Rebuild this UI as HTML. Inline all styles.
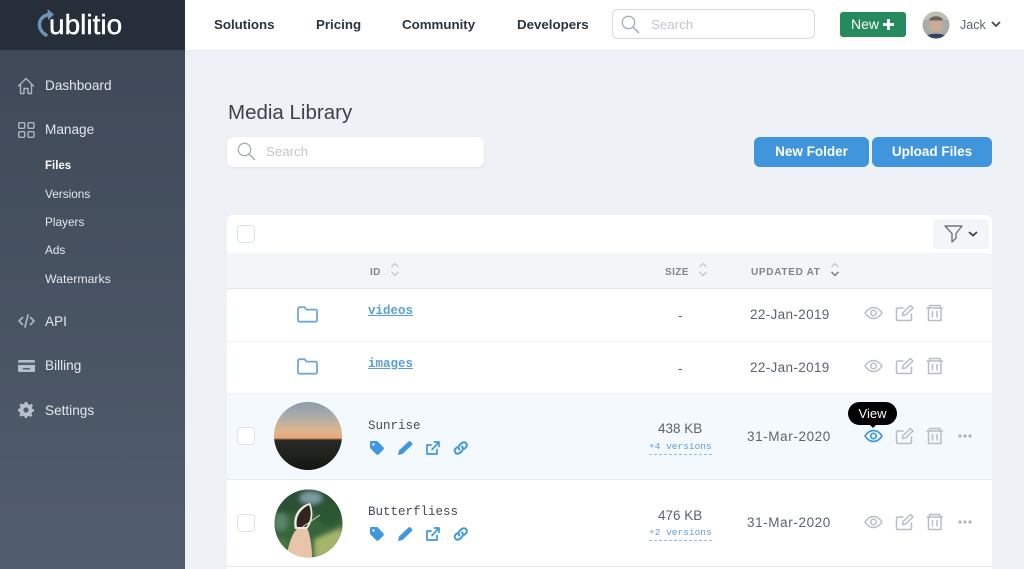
<!DOCTYPE html>
<html><head><meta charset="utf-8"><style>
*{box-sizing:border-box}
html,body{margin:0;padding:0;width:1024px;height:569px;overflow:hidden;background:#eef1f5;font-family:"Liberation Sans",sans-serif}
.t{position:absolute;white-space:nowrap;line-height:1}
.a{position:absolute}
svg{position:absolute;overflow:visible}
.side{color:#e4e8ee;font-size:13.6px}
.sub{color:#e4e8ee;font-size:11.8px}
.nav{color:#2b3440;font-size:13.3px;font-weight:bold;top:18px}
.hd{color:#7d858d;font-size:10px;font-weight:bold;letter-spacing:.4px}
.mono{font-family:"Liberation Mono",monospace}
.date{color:#5d646c;font-size:13.5px;letter-spacing:.35px}
.size{color:#5d646c;font-size:13.5px}
.ver{font-family:"Liberation Mono",monospace;font-size:9.5px;color:#5f9fd6;border-bottom:1px dashed #8fbde3;padding-bottom:2px}
.cb{position:absolute;width:18px;height:18px;border:1px solid #dfe3e8;border-radius:4px;background:#fff}
.g{fill:none;stroke:#b9bec4;stroke-width:1.5;stroke-linecap:round;stroke-linejoin:round}
.b{fill:none;stroke:#3f97dd;stroke-width:1.7;stroke-linecap:round;stroke-linejoin:round}
.s{fill:none;stroke:#aab6c4;stroke-width:1.4;stroke-linecap:round;stroke-linejoin:round}
</style></head><body>

<!-- sidebar -->
<div class="a" style="left:0;top:0;width:185px;height:50px;background:#262f39"></div>
<div class="a" style="left:0;top:50px;width:185px;height:519px;background:linear-gradient(#3f4958,#525d6d)"></div>
<svg style="left:36px;top:8px" width="30" height="30" viewBox="0 0 30 30"><path d="M10 27C3 23 1.500 15 6 10C8.500 7.500 11 6.500 14 6.500" fill="none" stroke="#6f94b5" stroke-width="3.400" stroke-linecap="round"/><path d="M11.500 1L18 6.500L12 12Z" fill="#6f94b5"/></svg>
<div class="t" style="left:49px;top:11px;color:#fff;font-size:28px;-webkit-text-stroke:.4px #fff">ublitio</div>

<svg style="left:17px;top:77px" width="18" height="18" viewBox="0 0 18 18"><path class="s" d="M1.500 9L9 1.500L16.500 9M3.500 7.500V16.500H7V11.500H11V16.500H14.500V7.500"/></svg>
<div class="t side" style="left:45px;top:79px">Dashboard</div>
<svg style="left:18px;top:122px" width="17" height="16" viewBox="0 0 17 16"><g class="s"><rect x=".7" y=".7" width="6" height="5.6" rx="1"/><rect x="10" y=".7" width="6" height="5.6" rx="1"/><rect x=".7" y="9.7" width="6" height="5.6" rx="1"/><rect x="10" y="9.7" width="6" height="5.6" rx="1"/></g></svg>
<div class="t side" style="left:45px;top:123px">Manage</div>
<div class="t sub" style="left:45px;top:161px;color:#fff;font-weight:bold;font-size:11.500px">Files</div>
<div class="t sub" style="left:45px;top:189px">Versions</div>
<div class="t sub" style="left:45px;top:217px">Players</div>
<div class="t sub" style="left:45px;top:245px">Ads</div>
<div class="t sub" style="left:45px;top:273px;font-size:12.300px">Watermarks</div>
<svg style="left:18px;top:314px" width="17" height="14" viewBox="0 0 17 14"><path class="s" style="stroke-width:1.7" d="M4.500 3.500L1 7L4.500 10.500M12.500 3.500L16 7L12.500 10.500M10 1L7 13"/></svg>
<div class="t side" style="left:45px;top:315px">API</div>
<svg style="left:18px;top:360px" width="17" height="12" viewBox="0 0 17 12"><rect width="17" height="12" rx="1.5" fill="#b5c0cc"/><rect y="2.500" width="17" height="2.500" fill="#525d6d"/><rect x="5" y="8" width="7" height="1.5" fill="#525d6d"/></svg>
<div class="t side" style="left:45px;top:359px">Billing</div>
<svg style="left:18px;top:402px" width="16" height="16" viewBox="0 0 16 16"><path d="M6.700 0H9.300L9.800 2.100L11.500 2.900L13.400 1.800L15 3.600L13.800 5.300L14.300 7L16 7.500V9.500L14.200 10L13.400 11.700L14.400 13.500L12.700 15L11 13.900L9.400 14.400L9 16H6.900L6.400 14.300L4.700 13.700L3 14.800L1.200 13.200L2.300 11.400L1.700 9.800L0 9.400V7L1.800 6.500L2.500 4.800L1.500 3L3.200 1.400L4.900 2.400L6.400 1.800Z" fill="#b5c0cc"/><circle cx="8" cy="8" r="2.600" fill="#525d6d"/></svg>
<div class="t side" style="left:45px;top:404px">Settings</div>

<!-- top nav -->
<div class="a" style="left:185px;top:0;width:839px;height:51px;background:#fff;border-bottom:1px solid #e4e7eb"></div>
<div class="t nav" style="left:214px">Solutions</div>
<div class="t nav" style="left:316px">Pricing</div>
<div class="t nav" style="left:402px">Community</div>
<div class="t nav" style="left:517px">Developers</div>
<div class="a" style="left:612px;top:9px;width:203px;height:30px;border:1px solid #d5dae0;border-radius:6px;background:#fff"></div>
<svg style="left:621px;top:15px" width="19" height="19" viewBox="0 0 19 19"><circle cx="7.500" cy="7.500" r="6.200" fill="none" stroke="#a8adb3" stroke-width="1.300"/><path d="M12 12L18 18" stroke="#a8adb3" stroke-width="1.400"/></svg>
<div class="t" style="left:651px;top:18px;color:#c2c6cb;font-size:13.300px">Search</div>
<div class="a" style="left:840px;top:12px;width:66px;height:25px;background:#258a5e;border-radius:3px"></div>
<div class="t" style="left:851px;top:17px;color:#fff;font-size:14px">New</div>
<svg style="left:882px;top:18px" width="13" height="13" viewBox="0 0 13 13"><path d="M6.500 1V12M1 6.500H12" stroke="#fff" stroke-width="2.800"/></svg>
<svg style="left:922px;top:11px" width="28" height="28" viewBox="0 0 28 28"><defs><clipPath id="av"><circle cx="14" cy="14" r="13.500"/></clipPath></defs><g clip-path="url(#av)"><rect width="28" height="28" fill="#a8aca6"/><rect x="0" y="0" width="28" height="9" fill="#c0bdb1"/><ellipse cx="14" cy="13" rx="6.500" ry="8" fill="#cdaa96"/><path d="M7 9C9 4 19 4 21 9L20 9.500H8Z" fill="#6a6762"/><path d="M1 28C3 21 25 21 27 28Z" fill="#33425c"/></g></svg>
<div class="t" style="left:960px;top:19px;color:#5d646c;font-size:12.500px">Jack</div>
<svg style="left:991px;top:21px" width="10" height="7" viewBox="0 0 10 7"><path d="M1 1L5 5L9 1" fill="none" stroke="#444c55" stroke-width="1.800"/></svg>

<!-- header -->
<div class="t" style="left:228px;top:103px;color:#3a424c;font-size:20.500px">Media Library</div>
<div class="a" style="left:227px;top:137px;width:257px;height:30px;background:#fff;border-radius:6px;box-shadow:0 1px 3px rgba(0,0,0,.06)"></div>
<svg style="left:237px;top:142px" width="19" height="19" viewBox="0 0 19 19"><circle cx="7.500" cy="7.500" r="6.200" fill="none" stroke="#a8adb3" stroke-width="1.300"/><path d="M12 12L18 18" stroke="#a8adb3" stroke-width="1.400"/></svg>
<div class="t" style="left:266px;top:145px;color:#c2c6cb;font-size:13.300px">Search</div>
<div class="a" style="left:754px;top:137px;width:115px;height:30px;background:#4095dc;border-radius:6px"></div>
<div class="t" style="left:754px;top:145px;width:115px;text-align:center;color:#fff;font-size:13.500px;font-weight:bold">New Folder</div>
<div class="a" style="left:872px;top:137px;width:120px;height:30px;background:#4095dc;border-radius:6px"></div>
<div class="t" style="left:872px;top:145px;width:120px;text-align:center;color:#fff;font-size:13.500px;font-weight:bold">Upload Files</div>

<!-- table -->
<div class="a" style="left:227px;top:215px;width:765px;height:354px;background:#fff;border-radius:6px 6px 0 0"></div>
<div class="cb" style="left:237px;top:225px"></div>
<div class="a" style="left:933px;top:219px;width:56px;height:30px;background:#f3f6f9;border-radius:4px"></div>
<svg style="left:944px;top:225px" width="19" height="18" viewBox="0 0 19 18"><path d="M1 1H18L12 8.500V13L8 17V8.500Z" fill="none" stroke="#6e757d" stroke-width="1.400" stroke-linejoin="round"/></svg>
<svg style="left:968px;top:231px" width="10" height="6" viewBox="0 0 10 6"><path d="M1 1L5 4.500L9 1" fill="none" stroke="#3b434c" stroke-width="1.800"/></svg>

<div class="a" style="left:227px;top:253px;width:765px;height:36px;background:#f3f6f9;border-bottom:1px solid #e1e5e9"></div>
<div class="t hd" style="left:370px;top:267px;margin-top:1px">ID</div>
<svg style="left:390px;top:262px" width="10" height="15" viewBox="0 0 10 15"><path d="M1.500 5L5 1.500L8.500 5M1.500 10L5 13.500L8.500 10" fill="none" stroke="#c3c8cd" stroke-width="1.300"/></svg>
<div class="t hd" style="left:665px;top:267px;margin-top:1px">SIZE</div>
<svg style="left:698px;top:262px" width="10" height="15" viewBox="0 0 10 15"><path d="M1.500 5L5 1.500L8.500 5M1.500 10L5 13.500L8.500 10" fill="none" stroke="#c3c8cd" stroke-width="1.300"/></svg>
<div class="t hd" style="left:751px;top:267px;margin-top:1px;letter-spacing:.7px">UPDATED AT</div>
<svg style="left:830px;top:262px" width="10" height="15" viewBox="0 0 10 15"><path d="M1.500 5L5 1.500L8.500 5" fill="none" stroke="#c3c8cd" stroke-width="1.300"/><path d="M1.500 10L5 13.500L8.500 10" fill="none" stroke="#6e757d" stroke-width="1.300"/></svg>

<!-- rows backgrounds -->
<div class="a" style="left:227px;top:341px;width:765px;height:1px;background:#f1f3f6"></div>
<div class="a" style="left:227px;top:393px;width:765px;height:87px;background:#f4f9fe;border-top:1px solid #eef1f5;border-bottom:1px solid #e6e9ed"></div>
<div class="a" style="left:227px;top:566px;width:765px;height:1px;background:#e6e9ed"></div>

<!-- folder rows -->
<svg style="left:297px;top:306px" width="21" height="17" viewBox="0 0 21 17"><path d="M1 3C1 2 1.700 1.200 2.700 1.200H7.500L9.500 3.600H18.500C19.400 3.600 20 4.200 20 5.200V14C20 15 19.400 15.700 18.500 15.700H2.500C1.600 15.700 1 15 1 14Z" fill="none" stroke="#6ea8dc" stroke-width="1.800" stroke-linejoin="round"/></svg>
<svg style="left:297px;top:358px" width="21" height="17" viewBox="0 0 21 17"><path d="M1 3C1 2 1.700 1.200 2.700 1.200H7.500L9.500 3.600H18.500C19.400 3.600 20 4.200 20 5.200V14C20 15 19.400 15.700 18.500 15.700H2.500C1.600 15.700 1 15 1 14Z" fill="none" stroke="#6ea8dc" stroke-width="1.800" stroke-linejoin="round"/></svg>
<div class="t mono" style="left:368px;top:305px;font-size:12.500px;font-weight:bold;color:#5a9fd8;text-decoration:underline">videos</div>
<div class="t mono" style="left:368px;top:358px;font-size:12.500px;font-weight:bold;color:#5a9fd8;text-decoration:underline">images</div>
<div class="t date" style="left:678px;top:309px">-</div>
<div class="t date" style="left:678px;top:362px">-</div>
<div class="t date" style="left:750px;top:308px">22-Jan-2019</div>
<div class="t date" style="left:750px;top:361px">22-Jan-2019</div>

<svg style="left:864px;top:304px" width="80" height="18" viewBox="0 0 80 18"><g class="g"><path d="M1 9C4 4.500 7 3.500 9.500 3.500C12 3.500 15 4.500 18 9C15 13.500 12 14.500 9.500 14.500C7 14.500 4 13.500 1 9Z"/><circle cx="9.500" cy="9" r="2.700"/><path d="M39 4H34C33 4 32.500 4.700 32.500 5.500V15C32.500 15.800 33 16.500 34 16.500H46C47 16.500 47.500 15.800 47.500 15V10M38.500 11.500L39 8.500L46.500 1.500L49 4L41.500 11Z"/><path d="M63 4H78.500M65.500 1.500H76V4H65.500ZM64.500 4V16.500H77V4M68.500 7.500V13M73 7.500V13"/></g></svg>
<svg style="left:864px;top:357px" width="80" height="18" viewBox="0 0 80 18"><g class="g"><path d="M1 9C4 4.500 7 3.500 9.500 3.500C12 3.500 15 4.500 18 9C15 13.500 12 14.500 9.500 14.500C7 14.500 4 13.500 1 9Z"/><circle cx="9.500" cy="9" r="2.700"/><path d="M39 4H34C33 4 32.500 4.700 32.500 5.500V15C32.500 15.800 33 16.500 34 16.500H46C47 16.500 47.500 15.800 47.500 15V10M38.500 11.500L39 8.500L46.500 1.500L49 4L41.500 11Z"/><path d="M63 4H78.500M65.500 1.500H76V4H65.500ZM64.500 4V16.500H77V4M68.500 7.500V13M73 7.500V13"/></g></svg>

<!-- media rows -->
<div class="cb" style="left:237px;top:427px"></div>
<div class="cb" style="left:237px;top:514px"></div>
<div class="a" style="left:274px;top:402px;width:68px;height:68px;border-radius:50%;background:linear-gradient(#8c9cad 0%,#aeaca8 22%,#dfb48c 42%,#e8a878 53%,#2a2a26 56%,#1f211b 80%,#141512 100%)"></div>
<svg style="left:274px;top:489px" width="69" height="69" viewBox="0 0 69 69"><defs><clipPath id="bf"><circle cx="34.500" cy="34.500" r="34"/></clipPath><filter id="bl"><feGaussianBlur stdDeviation="2.500"/></filter></defs><g clip-path="url(#bf)"><rect width="69" height="69" fill="#38643c"/><g filter="url(#bl)"><rect y="0" width="69" height="24" fill="#2c5135"/><ellipse cx="37" cy="9" rx="11" ry="6" fill="#7d9ba0"/><ellipse cx="7" cy="33" rx="7" ry="9" fill="#5b8468"/><ellipse cx="55" cy="25" rx="12" ry="12" fill="#2b5632"/><path d="M40 69V50L69 38V69Z" fill="#a4b56c"/><path d="M0 50H14L10 69H0Z" fill="#4b7a44"/></g><path d="M12 69C14 58 17 47 22 41C26 37 32 37 34 41C37 50 38 60 38 69Z" fill="#e8c4a8"/><path d="M21 40C18 28 24 17 36 14C40 22 39 33 33 40Z" fill="#f0ece4"/><path d="M23 38C21 29 26 20 35 16C38 23 37 32 32 38Z" fill="#33241e"/><path d="M24 41L46 26" stroke="#d8d8d0" stroke-width="1"/></g></svg>

<div class="t mono" style="left:368px;top:420px;font-size:12.500px;color:#454c54">Sunrise</div>
<div class="t mono" style="left:368px;top:506px;font-size:12.500px;color:#454c54">Butterfliess</div>

<!-- blue icon sets -->
<svg style="left:369px;top:440px" width="100" height="16" viewBox="0 0 100 16"><path d="M2 1H7.500C8 1 8.500 1.200 9 1.700L14.500 7.500C15 8 15 9 14.500 9.500L9.500 14.500C9 15 8 15 7.500 14.500L1.500 8.500C1.200 8 1 7.500 1 7V2C1 1.400 1.400 1 2 1Z" fill="#3f97dd"/><circle cx="4.500" cy="4.500" r="1.200" fill="#f4f9fe"/><path d="M29 15L30 10.500L39.500 1.500C40 1 41 1 41.500 1.500L43 3C43.500 3.500 43.500 4.500 43 5L33.500 14Z" fill="#3f97dd"/><g class="b"><path d="M62 5H58V14H68V9.500M63 9.500L69.500 2.500M65.500 2H70V6.500"/><path d="M90.500 9.500C89 8 89.500 6 91 4.500L92.500 3.200C94 2 96 2 97 3.200C98.200 4.400 98 6.200 97 7.300L95.500 8.700M93 6.500C94.500 8 94 10 92.500 11.500L91 12.800C89.500 14 87.500 14 86.500 12.800C85.300 11.600 85.500 9.800 86.500 8.700L88 7.300" stroke-width="2"/></g></svg>
<svg style="left:369px;top:526px" width="100" height="16" viewBox="0 0 100 16"><path d="M2 1H7.500C8 1 8.500 1.200 9 1.700L14.500 7.500C15 8 15 9 14.500 9.500L9.500 14.500C9 15 8 15 7.500 14.500L1.500 8.500C1.200 8 1 7.500 1 7V2C1 1.400 1.400 1 2 1Z" fill="#3f97dd"/><circle cx="4.500" cy="4.500" r="1.200" fill="#fff"/><path d="M29 15L30 10.500L39.500 1.500C40 1 41 1 41.500 1.500L43 3C43.500 3.500 43.500 4.500 43 5L33.500 14Z" fill="#3f97dd"/><g class="b"><path d="M62 5H58V14H68V9.500M63 9.500L69.500 2.500M65.500 2H70V6.500"/><path d="M90.500 9.500C89 8 89.500 6 91 4.500L92.500 3.200C94 2 96 2 97 3.200C98.200 4.400 98 6.200 97 7.300L95.500 8.700M93 6.500C94.500 8 94 10 92.500 11.500L91 12.800C89.500 14 87.500 14 86.500 12.800C85.300 11.600 85.500 9.800 86.500 8.700L88 7.300" stroke-width="2"/></g></svg>

<div class="t size" style="left:658px;top:422px">438 KB</div>
<div class="t ver" style="left:649px;top:442px">+4 versions</div>
<div class="t size" style="left:658px;top:509px">476 KB</div>
<div class="t ver" style="left:649px;top:528px">+2 versions</div>
<div class="t date" style="left:747px;top:430px;letter-spacing:.6px">31-Mar-2020</div>
<div class="t date" style="left:747px;top:516px;letter-spacing:.6px">31-Mar-2020</div>

<svg style="left:864px;top:427px" width="112" height="18" viewBox="0 0 112 18"><g class="b"><path d="M1 9C4 4.500 7 3.500 9.500 3.500C12 3.500 15 4.500 18 9C15 13.500 12 14.500 9.500 14.500C7 14.500 4 13.500 1 9Z"/><circle cx="9.500" cy="9" r="2.700"/></g><g class="g"><path d="M39 4H34C33 4 32.500 4.700 32.500 5.500V15C32.500 15.800 33 16.500 34 16.500H46C47 16.500 47.500 15.800 47.500 15V10M38.500 11.500L39 8.500L46.500 1.500L49 4L41.500 11Z"/><path d="M63 4H78.500M65.500 1.500H76V4H65.500ZM64.500 4V16.500H77V4M68.500 7.500V13M73 7.500V13"/></g><g fill="#aeb3b9"><circle cx="96" cy="9" r="1.600"/><circle cx="101" cy="9" r="1.600"/><circle cx="106" cy="9" r="1.600"/></g></svg>
<svg style="left:864px;top:513px" width="112" height="18" viewBox="0 0 112 18"><g class="g"><path d="M1 9C4 4.500 7 3.500 9.500 3.500C12 3.500 15 4.500 18 9C15 13.500 12 14.500 9.500 14.500C7 14.500 4 13.500 1 9Z"/><circle cx="9.500" cy="9" r="2.700"/><path d="M39 4H34C33 4 32.500 4.700 32.500 5.500V15C32.500 15.800 33 16.500 34 16.500H46C47 16.500 47.500 15.800 47.500 15V10M38.500 11.500L39 8.500L46.500 1.500L49 4L41.500 11Z"/><path d="M63 4H78.500M65.500 1.500H76V4H65.500ZM64.500 4V16.500H77V4M68.500 7.500V13M73 7.500V13"/></g><g fill="#aeb3b9"><circle cx="96" cy="9" r="1.600"/><circle cx="101" cy="9" r="1.600"/><circle cx="106" cy="9" r="1.600"/></g></svg>

<!-- tooltip -->
<div class="a" style="left:848px;top:402px;width:49px;height:23px;background:#000;border-radius:11.500px"></div>
<div class="a" style="left:869px;top:424px;width:0;height:0;border-left:4px solid transparent;border-right:4px solid transparent;border-top:4px solid #000"></div>
<div class="t" style="left:848px;top:407px;width:49px;text-align:center;color:#fff;font-size:13px">View</div>

</body></html>
